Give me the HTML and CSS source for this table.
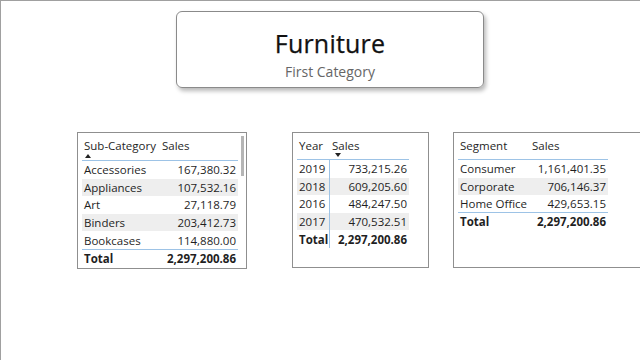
FILE: index.html
```html
<!DOCTYPE html>
<html>
<head>
<meta charset="utf-8">
<link rel="stylesheet" href="styles.css">
</head>
<body>
<div class="page">
  <div class="card">
    <div class="card-title">Furniture</div>
    <div class="card-sub">First Category</div>
  </div>
  <div class="tables">
    <div class="visual v1">
      <div class="tbl t1">
        <div class="hdr"><div class="hc">Sub-Category<span class="arrow up"></span></div><div class="hc">Sales</div></div>
        <div class="row"><span>Accessories</span><span class="num">167,380.32</span></div>
        <div class="row alt"><span>Appliances</span><span class="num">107,532.16</span></div>
        <div class="row"><span>Art</span><span class="num">27,118.79</span></div>
        <div class="row alt"><span>Binders</span><span class="num">203,412.73</span></div>
        <div class="row"><span>Bookcases</span><span class="num">114,880.00</span></div>
        <div class="row total"><span>Total</span><span class="num">2,297,200.86</span></div>
      </div>
      <div class="scroll"></div>
    </div>
    <div class="visual v2">
      <div class="tbl t2">
        <div class="hdr"><div class="hc">Year</div><div class="hc">Sales<span class="arrow down"></span></div></div>
        <div class="row"><span class="yc">2019</span><span class="num">733,215.26</span></div>
        <div class="row alt"><span class="yc">2018</span><span class="num">609,205.60</span></div>
        <div class="row"><span class="yc">2016</span><span class="num">484,247.50</span></div>
        <div class="row alt"><span class="yc">2017</span><span class="num">470,532.51</span></div>
        <div class="row total"><span class="yc">Total</span><span class="num">2,297,200.86</span></div>
      </div>
    </div>
    <div class="visual v3">
      <div class="tbl t3">
        <div class="hdr"><div class="hc">Segment</div><div class="hc">Sales</div></div>
        <div class="row"><span>Consumer</span><span class="num">1,161,401.35</span></div>
        <div class="row alt"><span>Corporate</span><span class="num">706,146.37</span></div>
        <div class="row"><span>Home Office</span><span class="num">429,653.15</span></div>
        <div class="row total"><span>Total</span><span class="num">2,297,200.86</span></div>
      </div>
    </div>
  </div>
</div>
</body>
</html>
```

FILE: styles.css
```css
* { box-sizing: border-box; }
html, body { margin: 0; padding: 0; }
body {
  width: 640px;
  height: 360px;
  overflow: hidden;
  background: #fff;
  font-family: "Open Sans", "Noto Sans", sans-serif;
  color: #1f1f1f;
}
.page {
  width: 640px;
  height: 360px;
  border-top: 1px solid #a0a0a0;
  border-left: 1px solid #a0a0a0;
  padding-top: 10px;
}
.card {
  margin-left: 175px;
  width: 308px;
  height: 77px;
  border: 1px solid #8a8a8a;
  border-radius: 6px;
  box-shadow: 2px 3px 4px rgba(0,0,0,0.28);
  display: flex;
  flex-direction: column;
  align-items: center;
  padding-top: 16px;
}
.card-title {
  font-size: 25px;
  line-height: 30px;
  color: #111;
  letter-spacing: 0.2px;
  -webkit-text-stroke: 0.25px #111;
}
.card-sub {
  font-size: 14px;
  line-height: 18px;
  color: #666;
  margin-top: 5px;
}
.tables {
  display: flex;
  margin-top: 44px;
  margin-left: 76px;
}
.visual {
  position: relative;
  height: 137px;
  border: 1px solid #8f8f8f;
  padding: 5px 4px 0 4px;
  flex: none;
}
.v1 { width: 170px; }
.v2 { width: 137px; margin-left: 45px; height: 136px; }
.v3 { width: 200px; margin-left: 24px; height: 136px; }
.tbl {
  font-size: 11.5px;
}
.hdr {
  display: grid;
  height: 23px;
  border-bottom: 1px solid #9dc3e6;
  align-items: start;
}
.hc {
  position: relative;
  padding-left: 2px;
  line-height: 15px;
}
.row {
  display: grid;
  height: 17.6px;
  align-items: center;
  line-height: 17px;
}
.row > span { padding-left: 2px; }
.row .num { text-align: right; padding-right: 2px; }
.row.alt { background: #eeeeee; }
.row.total { font-weight: 700; }
.t1 { width: 156px; }
.t1 .hdr, .t1 .row { grid-template-columns: 78px 78px; }
.t1 .row.total { border-top: 1px solid #9dc3e6; height: 19px; }
.t2 { width: 112px; }
.t2 .hdr, .t2 .row { grid-template-columns: 33px 79px; }
.t2 .hdr { height: 22px; }
.t2 .yc { border-right: 1px solid #9dc3e6; height: 100%; display: flex; align-items: center; }
.t2 .hdr .hc:first-child { height: 100%; }
.t3 { width: 150px; }
.t3 .hdr, .t3 .row { grid-template-columns: 72px 78px; }
.t3 .hdr { height: 22px; }
.t3 .row:nth-child(4) { border-bottom: 1px solid #9dc3e6; }
.arrow {
  position: absolute;
  left: 3px;
  top: 16px;
  width: 0;
  height: 0;
  border-left: 3.5px solid transparent;
  border-right: 3.5px solid transparent;
}
.arrow.up { border-bottom: 4px solid #222; }
.arrow.down { border-top: 4px solid #222; left: 5px; top: 15px; }
.scroll {
  position: absolute;
  right: 2px;
  top: 3px;
  width: 3px;
  height: 40px;
  background: #b5b5b5;
}
```
